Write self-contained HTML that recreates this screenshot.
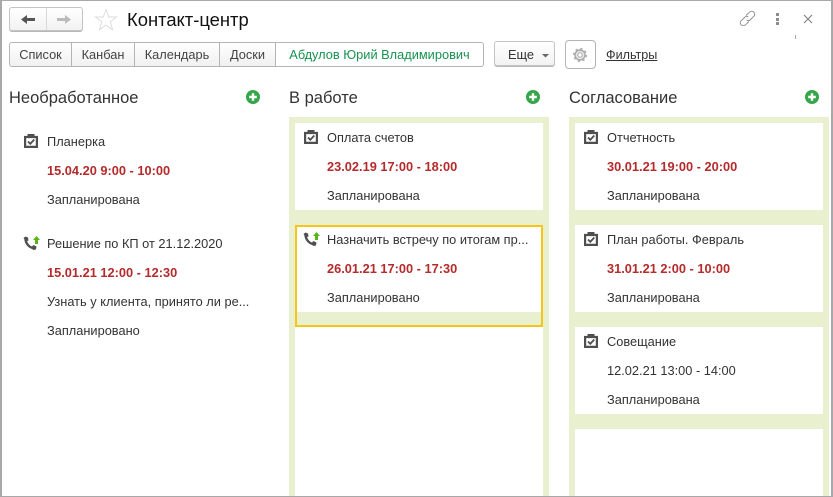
<!DOCTYPE html>
<html><head><meta charset="utf-8"><style>
html,body{margin:0;padding:0;background:#fff}
#p{position:relative;width:833px;height:497px;overflow:hidden;background:#fff;font-family:"Liberation Sans",Arial,sans-serif;color:#333;font-size:12.8px}
#p div,#p svg,#p a{position:absolute;box-sizing:border-box}
.t{white-space:nowrap;line-height:14px;font-size:12.8px;color:#333}
.r{font-weight:bold;color:#b52a2a}
.h{font-size:16.5px;line-height:20px;color:#333;white-space:nowrap}
.g{background:#e9f0cf}
.w{background:#fff}
.btn{background:linear-gradient(#fff,#f2f2f2);border:1px solid #c4c4c4}
.tab{top:42px;height:25px;line-height:23px;text-align:center;font-size:12.8px;color:#444;border:1px solid #b4b4b4;background:linear-gradient(#fff,#f0f0f0);white-space:nowrap}
</style></head><body><div id="p">
<div style="left:0;top:0;width:833px;height:497px;border:1px solid #a8a8a8;border-left-width:2px;border-right-width:2px;border-top-width:1px"></div>

<div class="btn" style="left:9px;top:7px;width:74px;height:24px;border-radius:3px;box-shadow:0 1px 0 #b8b8b8"></div>
<div style="left:46px;top:8px;width:1px;height:22px;background:#d8d8d8"></div>
<svg style="left:21px;top:14px" width="15" height="11" viewBox="0 0 15 11"><path d="M0 5.500L6 1V4H14V7H6V10Z" fill="#555"/></svg>
<svg style="left:56px;top:14px" width="15" height="11" viewBox="0 0 15 11"><path d="M15 5.500L9 1V4H1V7H9V10Z" fill="#bbb"/></svg>
<svg style="left:94px;top:8px" width="24" height="24" viewBox="0 0 24 24"><path d="M12 1.500L14.800 9H22.500L16.300 13.800L18.600 21.800L12 17L5.400 21.800L7.700 13.800L1.500 9H9.200Z" fill="#fff" stroke="#dadada" stroke-width="0.9"/></svg>
<div style="left:127px;top:9px;font-size:18.4px;line-height:22px;color:#111;white-space:nowrap">Контакт-центр</div>

<svg style="left:739px;top:10px" width="17" height="17" viewBox="0 0 17 17" fill="none" stroke="#8a8a8a" stroke-width="0.9"><path d="M7 5.500L10.500 2.200C11.800 1 13.600 1 14.800 2.200C16 3.400 16 5 14.800 6.300L11 10C10 10.900 8.500 10.900 7.700 9.800"/><path d="M10 11.500L6.500 14.800C5.200 16 3.400 16 2.200 14.800C1 13.600 1 12 2.200 10.700L6 7C7 6.100 8.500 6.100 9.300 7.200"/></svg>
<div style="left:776px;top:13px;width:3px;height:3px;background:#8c8c8c"></div>
<div style="left:776px;top:18px;width:3px;height:3px;background:#8c8c8c"></div>
<div style="left:776px;top:22px;width:3px;height:3px;background:#8c8c8c"></div>
<svg style="left:803px;top:14px" width="10" height="10" viewBox="0 0 10 10"><path d="M1 1L9 9M9 1L1 9" stroke="#777" stroke-width="0.9" fill="none"/></svg>
<div style="left:795px;top:35px;width:1px;height:4px;background:#aaa"></div>

<div class="tab" style="left:9px;width:63px;border-radius:3px 0 0 3px">Список</div>
<div class="tab" style="left:71px;width:64px">Канбан</div>
<div class="tab" style="left:134px;width:86px">Календарь</div>
<div class="tab" style="left:219px;width:57px">Доски</div>
<div class="tab" style="left:275px;width:209px;background:#fff;color:#17924f;border-radius:0 3px 3px 0;">Абдулов Юрий Владимирович</div>

<div class="btn" style="left:494px;top:41px;width:61px;height:25px;border-radius:3px;box-shadow:0 1px 0 #b8b8b8"></div>
<div class="t" style="left:508px;top:48px;color:#333">Еще</div>
<svg style="left:542px;top:54px" width="7" height="4" viewBox="0 0 7 4"><path d="M0 0H7L3.500 3.500Z" fill="#666"/></svg>
<div style="left:565px;top:40px;width:31px;height:29px;border:1px solid #b4b4b4;border-radius:4px;background:#fff"></div>
<svg style="left:572px;top:47px" width="16" height="16" viewBox="0 0 16 16"><circle cx="8" cy="8" r="6.300" fill="none" stroke="#b0b0b0" stroke-width="1.600" stroke-dasharray="2.200 2.750"/><circle cx="8" cy="8" r="5" fill="#e6e6e6" stroke="#a8a8a8" stroke-width="1.400"/><circle cx="8" cy="8" r="2.200" fill="#fff" stroke="#aaa" stroke-width="1"/></svg>
<div class="t" style="left:606px;top:48px;color:#333;text-decoration:underline;font-size:12.6px">Фильтры</div>

<div class="h" style="left:9px;top:88px">Необработанное</div>
<div class="h" style="left:289px;top:88px">В работе</div>
<div class="h" style="left:569px;top:88px">Согласование</div>
<svg style="left:246px;top:90px" width="14" height="14" viewBox="0 0 14 14"><circle cx="7" cy="7" r="7" fill="#35a64a"/><path d="M7 3.200V10.800M3.200 7H10.800" stroke="#fff" stroke-width="2.400"/></svg>
<svg style="left:526px;top:90px" width="14" height="14" viewBox="0 0 14 14"><circle cx="7" cy="7" r="7" fill="#35a64a"/><path d="M7 3.200V10.800M3.200 7H10.800" stroke="#fff" stroke-width="2.400"/></svg>
<svg style="left:805px;top:90px" width="14" height="14" viewBox="0 0 14 14"><circle cx="7" cy="7" r="7" fill="#35a64a"/><path d="M7 3.200V10.800M3.200 7H10.800" stroke="#fff" stroke-width="2.400"/></svg>

<!-- column 1 -->
<svg style="left:24px;top:134px" width="14" height="14" viewBox="0 0 14 14"><path d="M1.100 3H12.900V12.900H1.100Z" fill="#fff" stroke="#4f4f4f" stroke-width="2.200"/><rect x="3.500" y="0" width="7" height="3.500" fill="#4f4f4f"/><path d="M4 7.500L6.300 9.800L10.300 5.500" fill="none" stroke="#4f4f4f" stroke-width="1.800"/></svg>
<div class="t" style="left:47px;top:135px">Планерка</div>
<div class="t r" style="left:47px;top:164px">15.04.20 9:00 - 10:00</div>
<div class="t" style="left:47px;top:193px">Запланирована</div>
<svg style="left:23px;top:236px" width="18" height="15" viewBox="0 0 18 15"><path d="M2.500 2.500C2.500 7.500 6.500 12 11 12" fill="none" stroke="#505050" stroke-width="2.400"/><path d="M0.500 2L2.500 0.500L5 1.500L5.500 4.500L3 5.500Z" fill="#505050"/><path d="M8.500 11L10.500 9L13.500 10.500L13 13.500L10 14Z" fill="#505050"/><path d="M13.500 0L17 4H15V8H12V4H10Z" fill="#57b51a"/></svg>
<div class="t" style="left:47px;top:237px">Решение по КП от 21.12.2020</div>
<div class="t r" style="left:47px;top:266px">15.01.21 12:00 - 12:30</div>
<div class="t" style="left:47px;top:295px">Узнать у клиента, принято ли ре...</div>
<div class="t" style="left:47px;top:324px">Запланировано</div>

<!-- column 2 -->
<div class="g" style="left:289px;top:117px;width:260px;height:379px"></div>
<div class="w" style="left:295px;top:123px;width:248px;height:87px"></div>
<div class="w" style="left:295px;top:225px;width:248px;height:87px"></div>
<div class="w" style="left:295px;top:327px;width:248px;height:169px"></div>
<div style="left:295px;top:225px;width:248px;height:102px;border:2px solid #f5c518"></div>
<svg style="left:304px;top:130px" width="14" height="14" viewBox="0 0 14 14"><path d="M1.100 3H12.900V12.900H1.100Z" fill="#fff" stroke="#4f4f4f" stroke-width="2.200"/><rect x="3.500" y="0" width="7" height="3.500" fill="#4f4f4f"/><path d="M4 7.500L6.300 9.800L10.300 5.500" fill="none" stroke="#4f4f4f" stroke-width="1.800"/></svg>
<div class="t" style="left:327px;top:131px">Оплата счетов</div>
<div class="t r" style="left:327px;top:160px">23.02.19 17:00 - 18:00</div>
<div class="t" style="left:327px;top:189px">Запланирована</div>
<svg style="left:303px;top:232px" width="18" height="15" viewBox="0 0 18 15"><path d="M2.500 2.500C2.500 7.500 6.500 12 11 12" fill="none" stroke="#505050" stroke-width="2.400"/><path d="M0.500 2L2.500 0.500L5 1.500L5.500 4.500L3 5.500Z" fill="#505050"/><path d="M8.500 11L10.500 9L13.500 10.500L13 13.500L10 14Z" fill="#505050"/><path d="M13.500 0L17 4H15V8H12V4H10Z" fill="#57b51a"/></svg>
<div class="t" style="left:327px;top:233px">Назначить встречу по итогам пр...</div>
<div class="t r" style="left:327px;top:262px">26.01.21 17:00 - 17:30</div>
<div class="t" style="left:327px;top:291px">Запланировано</div>

<!-- column 3 -->
<div class="g" style="left:569px;top:117px;width:260px;height:379px"></div>
<div class="w" style="left:575px;top:123px;width:248px;height:87px"></div>
<div class="w" style="left:575px;top:225px;width:248px;height:87px"></div>
<div class="w" style="left:575px;top:327px;width:248px;height:87px"></div>
<div class="w" style="left:575px;top:429px;width:248px;height:67px"></div>
<svg style="left:584px;top:130px" width="14" height="14" viewBox="0 0 14 14"><path d="M1.100 3H12.900V12.900H1.100Z" fill="#fff" stroke="#4f4f4f" stroke-width="2.200"/><rect x="3.500" y="0" width="7" height="3.500" fill="#4f4f4f"/><path d="M4 7.500L6.300 9.800L10.300 5.500" fill="none" stroke="#4f4f4f" stroke-width="1.800"/></svg>
<div class="t" style="left:607px;top:131px">Отчетность</div>
<div class="t r" style="left:607px;top:160px">30.01.21 19:00 - 20:00</div>
<div class="t" style="left:607px;top:189px">Запланирована</div>
<svg style="left:584px;top:232px" width="14" height="14" viewBox="0 0 14 14"><path d="M1.100 3H12.900V12.900H1.100Z" fill="#fff" stroke="#4f4f4f" stroke-width="2.200"/><rect x="3.500" y="0" width="7" height="3.500" fill="#4f4f4f"/><path d="M4 7.500L6.300 9.800L10.300 5.500" fill="none" stroke="#4f4f4f" stroke-width="1.800"/></svg>
<div class="t" style="left:607px;top:233px">План работы. Февраль</div>
<div class="t r" style="left:607px;top:262px">31.01.21 2:00 - 10:00</div>
<div class="t" style="left:607px;top:291px">Запланирована</div>
<svg style="left:584px;top:334px" width="14" height="14" viewBox="0 0 14 14"><path d="M1.100 3H12.900V12.900H1.100Z" fill="#fff" stroke="#4f4f4f" stroke-width="2.200"/><rect x="3.500" y="0" width="7" height="3.500" fill="#4f4f4f"/><path d="M4 7.500L6.300 9.800L10.300 5.500" fill="none" stroke="#4f4f4f" stroke-width="1.800"/></svg>
<div class="t" style="left:607px;top:335px">Совещание</div>
<div class="t" style="left:607px;top:364px">12.02.21 13:00 - 14:00</div>
<div class="t" style="left:607px;top:393px">Запланирована</div>

<div style="left:0;top:496px;width:833px;height:1px;background:#a8a8a8"></div>
</div></body></html>
